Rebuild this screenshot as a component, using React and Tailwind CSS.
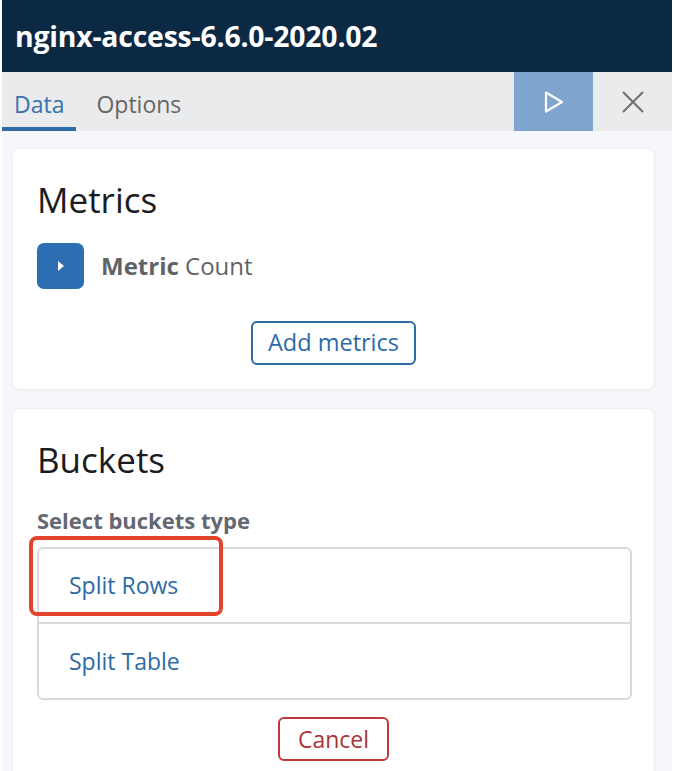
import React from "react";

const font = { fontFamily: '"Open Sans", "Noto Sans", sans-serif' };

function PlayIcon() {
  return (
    <svg width="22" height="24" viewBox="0 0 22 24" fill="none">
      <path
        d="M3 2.5 L19 12 L3 21.5 Z"
        stroke="#ffffff"
        strokeWidth="2.2"
        strokeLinejoin="round"
      />
    </svg>
  );
}

function CloseIcon() {
  return (
    <svg width="24" height="24" viewBox="0 0 24 24" fill="none">
      <path d="M2 2 L22 22 M22 2 L2 22" stroke="#6f6f6f" strokeWidth="2" />
    </svg>
  );
}

export default function App() {
  return (
    <div className="w-[687px] h-[771px] bg-white overflow-hidden" style={font}>
      <div className="ml-[2px] w-[670px] h-full bg-[#f5f7fa]">
        <div className="h-[72px] bg-[#0c2944] flex items-center px-[13px]">
          <h1 className="text-white text-[28.4px] font-bold tracking-[-0.2px]">
            nginx-access-6.6.0-2020.02
          </h1>
        </div>
        <div className="h-[59px] bg-[#eaebec] flex">
          <div className="relative flex items-center pt-[5px] px-[12px] text-[23px] text-[#3b72ad]">
            Data
            <div className="absolute left-0 right-0 bottom-0 h-[4px] bg-[#2d6aa6]" />
          </div>
          <div className="flex items-center pt-[5px] px-[20px] text-[23px] text-[#666]">
            Options
          </div>
          <div className="flex-1" />
          <button className="w-[79px] bg-[#7fa4cd] flex items-center justify-center">
            <PlayIcon />
          </button>
          <button className="w-[79px] flex items-center justify-center">
            <CloseIcon />
          </button>
        </div>
        <div className="flex flex-col gap-[18px] pl-[10px] pr-[17px] pt-[17px]">
          <section className="shrink-0 bg-white rounded-[8px] border border-[#eef0f3] shadow-[0_1px_2px_rgba(0,0,0,0.04)] h-[242px] px-[24px] pt-[28px]">
            <h2 className="text-[35px] leading-[46px] text-[#1a1c21]">Metrics</h2>
            <div className="mt-[20px] flex items-center gap-[17px]">
              <div className="w-[47px] h-[46px] rounded-[7px] bg-[#2c6db3] flex items-center justify-center">
                <svg width="8" height="12" viewBox="0 0 8 12">
                  <path d="M1 1 L7 6 L1 11 Z" fill="#fff" />
                </svg>
              </div>
              <div className="text-[24px] text-[#5f6368]">
                <span className="font-bold">Metric</span> Count
              </div>
            </div>
            <div className="mt-[32px] flex justify-center">
              <button className="h-[44px] px-[15px] border-2 border-[#2d6aa6] rounded-[6px] text-[23.5px] text-[#2d6aa6] leading-none">
                Add metrics
              </button>
            </div>
          </section>
          <section className="shrink-0 bg-white rounded-[8px] border border-[#eef0f3] shadow-[0_1px_2px_rgba(0,0,0,0.04)] h-[400px] px-[24px] pt-[28px]">
            <h2 className="text-[35px] leading-[46px] text-[#1a1c21]">Buckets</h2>
            <div className="mt-[22px] text-[22px] font-bold text-[#646870] leading-[30px]">
              Select buckets type
            </div>
            <div className="relative mt-[12px] w-[595px] border-2 border-[#d8dadd] rounded-[6px]">
              <div className="h-[75px] flex items-center px-[30px] text-[23px] text-[#2d6aa6] border-b-2 border-[#d8dadd]">
                Split Rows
              </div>
              <div className="h-[74px] flex items-center px-[30px] text-[23px] text-[#2d6aa6]">
                Split Table
              </div>
              <div className="absolute left-[-10px] top-[-13px] w-[194px] h-[80px] border-[4px] border-[#e4432b] rounded-[8px]" />
            </div>
            <div className="mt-[17px] flex justify-center">
              <button className="h-[44px] w-[111px] border-2 border-[#bd3a3a] rounded-[6px] text-[23px] text-[#a8343a] leading-none">
                Cancel
              </button>
            </div>
          </section>
        </div>
      </div>
    </div>
  );
}
